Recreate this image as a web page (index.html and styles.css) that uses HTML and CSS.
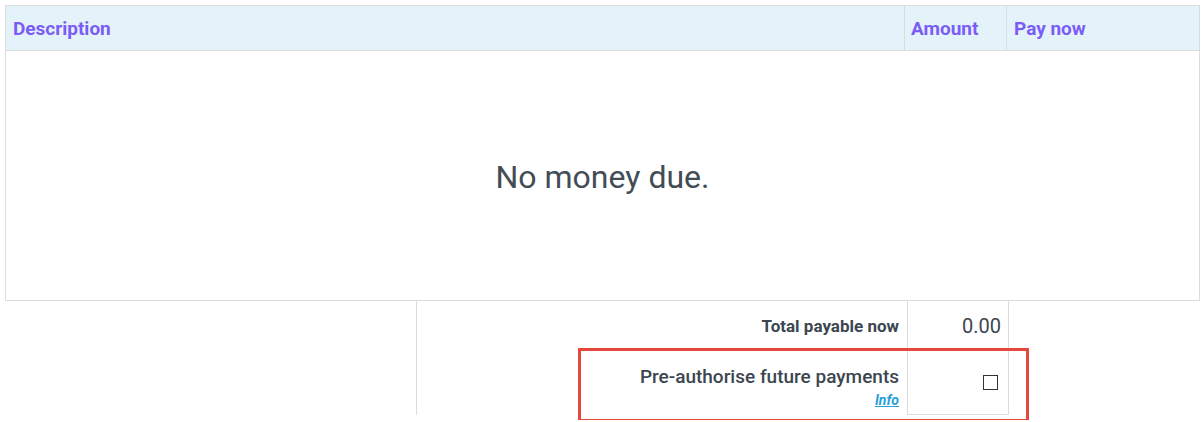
FILE: index.html
```html
<!DOCTYPE html>
<html lang="en">
  <head>
    <meta charset="UTF-8" />
    <title>Payments</title>
    <link rel="stylesheet" href="styles.css">
  </head>
  <body>

    <!-- Items due -->
    <table class="due">
      <thead>
        <tr>
          <th class="col-desc">Description</th>
          <th class="col-amount">Amount</th>
          <th class="col-pay">Pay now</th>
        </tr>
      </thead>
      <tbody>
        <tr>
          <td class="empty" colspan="3">No money due.</td>
        </tr>
      </tbody>
    </table>

    <!-- Totals -->
    <div class="summary">
      <div class="label total-label">Total payable now</div>
      <div class="cell total-cell">0.00</div>

      <div class="label preauth-label">
        <div>Pre-authorise future payments</div>
        <a href="#" class="info">Info</a>
      </div>
      <div class="cell preauth-cell">
        <input type="checkbox" class="check" />
      </div>

      <div class="highlight"></div>
    </div>

  </body>
</html>
```

FILE: styles.css
```css
* {
  box-sizing: border-box;
}

body {
  margin: 0;
  padding: 5px;
  font-family: Roboto, 'Liberation Sans', sans-serif;
  color: #3c4651;
  background: white;
}

.due {
  width: 1195px;
  border-collapse: collapse;
  border: 1px solid #dcdcdc;
}

.due th {
  height: 45px;
  padding: 0 6px;
  background-color: #e4f3f9;
  color: #7b5cf6;
  font-size: 19px;
  font-weight: 700;
  text-align: left;
  border: 1px solid #dcdcdc;
}

.due th.col-desc {
  padding-left: 7px;
}

.due .col-amount {
  width: 102px;
}

.due .col-pay {
  width: 193px;
  padding-left: 7px;
}

.due td.empty {
  height: 250px;
  text-align: center;
  font-size: 32px;
  font-weight: 400;
  color: #434c55;
  padding-top: 3px;
}

.summary {
  position: relative;
  margin-left: 411px;
  width: 592px;
  display: grid;
  grid-template-columns: 490px 102px;
  grid-template-rows: 50px 64px;
  border-left: 1px solid #dcdcdc;
}

.label {
  text-align: right;
  padding-right: 8px;
}

.total-label {
  align-self: center;
  font-size: 17px;
  font-weight: 700;
}

.preauth-label {
  padding-top: 15px;
  font-size: 19px;
  font-weight: 500;
  line-height: 22px;
}

.info {
  display: inline-block;
  font-size: 14px;
  line-height: 14px;
  font-weight: 700;
  font-style: italic;
  color: #2a9fd8;
}

.cell {
  border-left: 1px solid #dcdcdc;
  border-right: 1px solid #dcdcdc;
  display: flex;
  align-items: center;
  justify-content: flex-end;
}

.total-cell {
  padding-right: 7px;
  font-size: 20px;
  border-bottom: 1px solid #dcdcdc;
}

.preauth-cell {
  padding-right: 10px;
  border-bottom: 1px solid #dcdcdc;
}

.check {
  appearance: none;
  width: 15px;
  height: 15px;
  margin: 0;
  border: 1px solid #333;
  background: white;
}

/* red annotation box round the pre-authorise row */
.highlight {
  position: absolute;
  left: 161px;
  top: 47px;
  width: 451px;
  height: 74px;
  border: 3px solid #e5473d;
  pointer-events: none;
}
```
